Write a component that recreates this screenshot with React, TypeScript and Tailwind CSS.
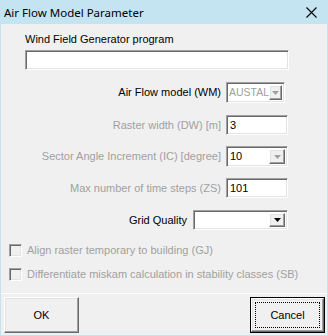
import React from "react";

const sunken =
  "border border-t-[#a0a0a0] border-l-[#a0a0a0] border-b-white border-r-white shadow-[inset_1px_1px_0_#696969,inset_-1px_-1px_0_#e3e3e3]";

const raised =
  "border border-t-white border-l-white border-b-[#696969] border-r-[#696969] shadow-[inset_-1px_-1px_0_#a0a0a0,inset_1px_1px_0_#e3e3e3]";

const Arrow: React.FC<{ disabled?: boolean; w?: string }> = ({ disabled, w = "w-[16px]" }) => (
  <div className={`flex h-full ${w} shrink-0 items-center justify-center bg-[#f0f0f0] ${raised}`}>
    <svg width="7" height="4" viewBox="0 0 7 4">
      <polygon points="0,0 7,0 3.5,4" fill={disabled ? "#a0a0a0" : "#000"} />
    </svg>
  </div>
);

const Row: React.FC<{ label: string; disabled?: boolean; labelW?: string; gap?: string; mt: string; children: React.ReactNode }> = ({
  label,
  disabled,
  labelW = "w-[196px]",
  gap = "ml-[5px]",
  mt,
  children,
}) => (
  <div className={`flex items-center ${mt}`}>
    <div className={`${labelW} whitespace-nowrap text-right ${disabled ? "text-[#a0a0a0]" : "text-black"}`}>{label}</div>
    <div className={gap}>{children}</div>
  </div>
);

const Check: React.FC<{ label: string; mt: string }> = ({ label, mt }) => (
  <div className={`flex items-center ${mt}`}>
    <div className={`h-[13px] w-[13px] bg-[#f0f0f0] ${sunken}`} />
    <span className="ml-[5px] whitespace-nowrap text-[#a0a0a0]">{label}</span>
  </div>
);

export default function App() {
  return (
    <div className="flex h-[336px] w-[328px] flex-col bg-[#f0f0f0] font-['Liberation_Sans',Arial,sans-serif] text-[11px] leading-[13px]">
      <div className="flex h-[24px] shrink-0 items-center justify-between bg-[#c4e4f1] pl-[4px] pr-[11px]">
        <span className="font-['Noto_Sans',sans-serif] text-[11.5px] text-black">Air Flow Model Parameter</span>
        <svg width="11" height="11" viewBox="0 0 11 11">
          <path d="M0.5 0.5 L10.5 10.5 M10.5 0.5 L0.5 10.5" stroke="#000" strokeWidth="1.1" />
        </svg>
      </div>
      <div className="flex flex-1 flex-col border-x border-b border-[#c4e4f1]">
        <div className="flex flex-col pl-[24px]">
          <div className="mt-[9px] text-black">Wind Field Generator program</div>
          <div className={`mt-[4px] h-[20px] w-[264px] bg-white ${sunken}`} />

          <Row label="Air Flow model (WM)" mt="mt-[12px]">
            <div className={`flex h-[21px] w-[59px] items-center bg-white py-[2px] pl-[2px] pr-[2px] ${sunken}`}>
              <span className="flex-1 whitespace-nowrap text-[10.5px] text-[#a0a0a0]">AUSTAL</span>
              <Arrow disabled w="w-[13px]" />
            </div>
          </Row>

          <Row label="Raster width (DW) [m]" disabled mt="mt-[12px]">
            <div className={`flex h-[20px] w-[62px] items-center bg-white px-[3px] ${sunken}`}>
              <span className="text-black">3</span>
            </div>
          </Row>

          <Row label="Sector Angle Increment (IC) [degree]" disabled mt="mt-[11px]">
            <div className={`flex h-[21px] w-[62px] items-center bg-white p-[2px] ${sunken}`}>
              <span className="flex-1 pl-[1px] text-black">10</span>
              <Arrow disabled />
            </div>
          </Row>

          <Row label="Max number of time steps (ZS)" disabled mt="mt-[11px]">
            <div className={`flex h-[20px] w-[62px] items-center bg-white px-[3px] ${sunken}`}>
              <span className="text-black">101</span>
            </div>
          </Row>

          <Row label="Grid Quality" labelW="w-[162px]" gap="ml-[6px]" mt="mt-[12px]">
            <div className={`flex h-[20px] w-[95px] items-center bg-white p-[2px] ${sunken}`}>
              <span className="flex-1" />
              <Arrow />
            </div>
          </Row>
        </div>

        <div className="flex flex-col pl-[8px]">
          <Check label="Align raster temporary to building (GJ)" mt="mt-[14px]" />
          <Check label="Differentiate miskam calculation in stability classes (SB)" mt="mt-[11px]" />
        </div>

        <div className="mt-[12px] h-px bg-white" />

        <div className="mt-[3px] flex justify-between pl-[3px] pr-[2px]">
          <button className={`h-[36px] w-[75px] bg-[#f0f0f0] text-black ${raised}`}>OK</button>
          <div className="h-[36px] w-[75px] border border-black">
            <button className={`flex h-full w-full items-center justify-center bg-[#f0f0f0] p-[3px] text-black ${raised}`}>
              <span className="flex h-full w-full items-center justify-center border border-dotted border-black">Cancel</span>
            </button>
          </div>
        </div>
      </div>
    </div>
  );
}
